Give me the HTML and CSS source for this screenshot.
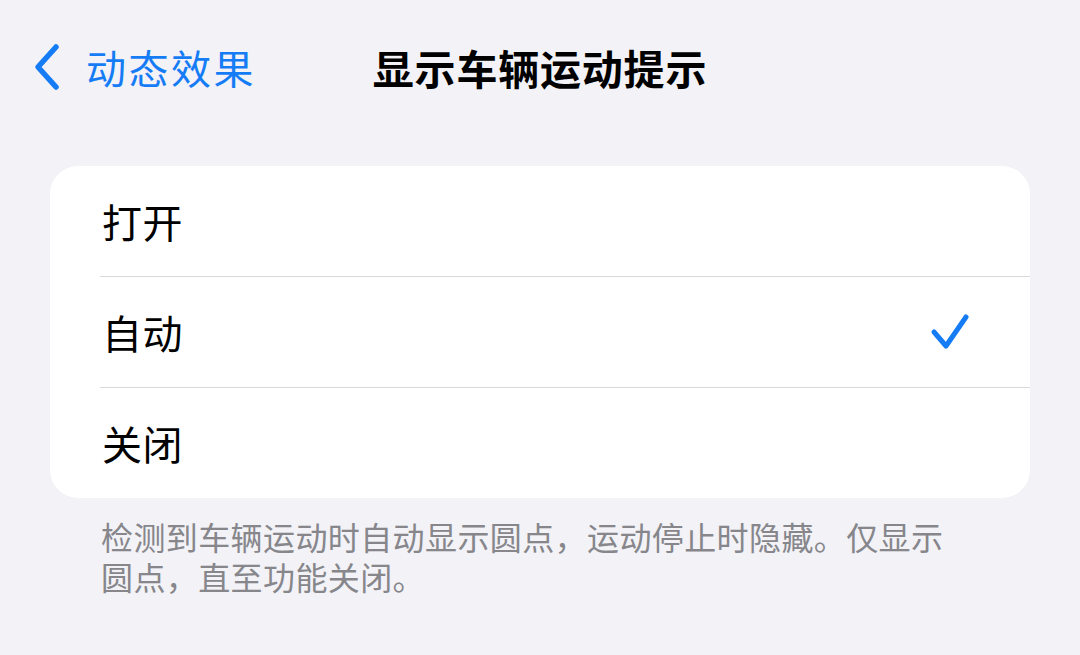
FILE: index.html
```html
<!DOCTYPE html>
<html lang="zh-CN">
<head>
    <meta charset="UTF-8">
    <title>显示车辆运动提示</title>
    <link rel="stylesheet" href="styles.css">
</head>
<body>
    <div class="navBar">
        <a class="back" href="javascript:;">
            <svg class="chevron" width="30" height="48" viewBox="0 0 30 48">
                <path d="M24 4 L6 24 L24 44" fill="none" stroke="#157cf6" stroke-width="5.5" stroke-linecap="round" stroke-linejoin="round"/>
            </svg>
            <span>动态效果</span>
        </a>
        <h1 class="title">显示车辆运动提示</h1>
        <div></div>
    </div>
    <div class="group">
        <div class="row"><div class="rowBody">打开</div></div>
        <div class="row"><div class="rowBody">自动
            <svg class="check" width="40" height="38" viewBox="0 0 40 38">
                <path d="M4 19 L16 33 L36 4" fill="none" stroke="#157cf6" stroke-width="5" stroke-linecap="round" stroke-linejoin="round"/>
            </svg>
        </div></div>
        <div class="row"><div class="rowBody">关闭</div></div>
    </div>
    <p class="footer">检测到车辆运动时自动显示圆点，运动停止时隐藏。仅显示圆点，直至功能关闭。</p>
</body>
</html>
```

FILE: styles.css
```css
*{
    margin: 0;
    padding: 0;
}
body{
    background: #f2f2f7;
    font-family: "Noto Sans CJK SC", "Noto Sans", sans-serif;
    color: #000;
}
.navBar{
    display: grid;
    grid-template-columns: 1fr auto 1fr;
    align-items: center;
    height: 134px;
}
.back{
    display: flex;
    align-items: center;
    gap: 24px;
    padding-left: 32px;
    color: #157cf6;
    text-decoration: none;
    font-size: 40px;
    letter-spacing: 2.5px;
}
.title{
    font-size: 41px;
    font-weight: 700;
    letter-spacing: 0.8px;
}
.group{
    margin: 32px 50px 0;
    background: #fff;
    border-radius: 28px;
    overflow: hidden;
}
.row{
    padding-left: 50px;
}
.rowBody{
    display: flex;
    align-items: center;
    justify-content: space-between;
    height: 110px;
    padding: 0 60px 0 2px;
    font-size: 40px;
    letter-spacing: 0.5px;
    border-bottom: 1.5px solid #d9d9dd;
}
.row:last-child .rowBody{
    border-bottom: none;
}
.footer{
    margin-top: 18px;
    padding: 0 80px 0 101px;
    max-width: 870px;
    font-size: 32px;
    line-height: 40px;
    letter-spacing: 0.4px;
    color: #86868b;
}
```
